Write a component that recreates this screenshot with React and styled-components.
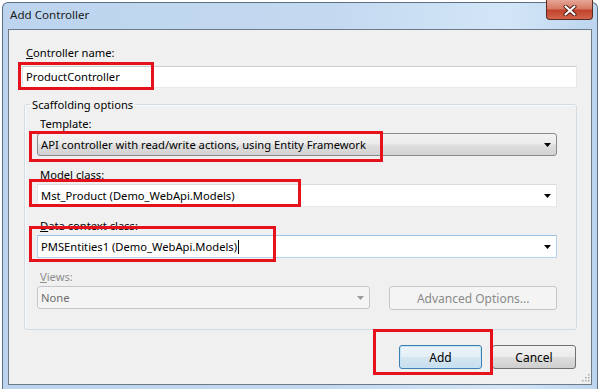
import React from "react";
import styled, { createGlobalStyle, css } from "styled-components";

const GlobalStyle = createGlobalStyle`
  html, body {
    margin: 0;
    padding: 0;
    background: #ffffff;
  }
  body {
    font-family: "Segoe UI", "Noto Sans", sans-serif;
    font-size: 11.2px;
    color: #000;
  }
  * {
    box-sizing: border-box;
  }
`;

const Window = styled.div`
  margin: 2px 0 0 2px;
  width: 596px;
  height: 387px;
  display: flex;
  flex-direction: column;
  border: 1px solid #5d6f84;
  border-bottom: none;
  border-radius: 6px 6px 0 0;
  background: linear-gradient(90deg, #bcd4ee 0%, #c3d9f0 55%, #d3e6f7 85%, #bcd5ee 100%);
`;

const TitleBar = styled.div`
  height: 26px;
  display: flex;
  align-items: flex-start;
  justify-content: space-between;
  padding: 0 4px 0 7px;
`;

const Title = styled.div`
  line-height: 24px;
  font-size: 11.6px;
  color: #1b1b1b;
`;

const CloseButton = styled.div`
  margin-top: -3px;
  width: 47px;
  height: 20px;
  display: flex;
  align-items: center;
  justify-content: center;
  padding-top: 1px;
  border: 1px solid #5a2b22;
  border-top: none;
  border-radius: 0 0 4px 4px;
  background: linear-gradient(180deg, #e6a797 0%, #d77a64 45%, #c3432c 55%, #d0654a 100%);
`;

const Client = styled.div`
  position: relative;
  margin: 0 5px;
  height: 356px;
  display: flex;
  flex-direction: column;
  padding: 15px 14px 0 13px;
  border: 1px solid #6b7989;
  background: #f0f0f0;
`;

const Label = styled.div`
  line-height: 15px;
  padding-left: ${(p) => (p.$indent ? p.$indent : 3)}px;
  margin-bottom: ${(p) => (p.$gap ? p.$gap : 2)}px;
  color: ${(p) => (p.$disabled ? "#8f8f8f" : "#000")};
`;

const Key = styled.span`
  text-decoration: underline;
`;

const Field = styled.div`
  position: relative;
  display: ${(p) => (p.$inline ? "inline-flex" : "flex")};
  flex-direction: column;
`;

const Mark = styled.div`
  position: absolute;
  z-index: 2;
  pointer-events: none;
  border: 3px solid #e5121c;
`;

const TextBox = styled.div`
  height: 22px;
  line-height: 20px;
  padding-left: 3px;
  background: #fff;
  border: 1px solid;
  border-color: #c9cdd2 #e2e6ea #e6eaee #e2e6ea;
`;

const Group = styled.fieldset`
  margin: 9px 0 0 2px;
  padding: 4px 19px 19px 12px;
  min-width: 0;
  border: 1px solid #d3dce2;
  border-radius: 3px;
  box-shadow: inset 1px 1px 0 #fbfbfb;
`;

const Legend = styled.legend`
  margin-left: -7px;
  padding: 0 2px;
  line-height: 15px;
`;

const Block = styled.div`
  margin-bottom: ${(p) => (p.$last ? 0 : 11)}px;
`;

const comboLooks = {
  button: css`
    border-color: #8a8a8a;
    border-radius: 3px;
    background: linear-gradient(180deg, #f3f3f3 0%, #ebebeb 48%, #dedede 52%, #d2d2d2 100%);
  `,
  edit: css`
    border-color: #d8dce0 #e3e6e9 #e6e9ec #e3e6e9;
    background: #fff;
  `,
  focus: css`
    border-color: #9bc1e6 #b3d0ec #b8d3ee #b3d0ec;
    background: #fff;
  `,
  disabled: css`
    border-color: #c4c7c9;
    border-radius: 3px;
    background: #f4f4f4;
    color: #6d6d6d;
  `,
};

const Combo = styled.div`
  width: ${(p) => (p.$width ? `${p.$width}px` : "auto")};
  height: 23px;
  display: flex;
  align-items: center;
  justify-content: space-between;
  padding: 0 5px 0 3px;
  border: 1px solid;
  ${(p) => comboLooks[p.$look || "edit"]}
`;

const ComboText = styled.span`
  line-height: 21px;
  white-space: nowrap;
`;

const Caret = styled.span`
  display: inline-block;
  width: 1px;
  height: 14px;
  margin-left: 1px;
  vertical-align: -3px;
  background: #000;
`;

const Arrow = ({ color = "#000" }) => (
  <svg width="7" height="4" viewBox="0 0 7 4">
    <polygon points="0,0 7,0 3.5,4" fill={color} />
  </svg>
);

const ViewsRow = styled.div`
  display: flex;
  gap: 19px;
`;

const buttonLooks = {
  normal: css`
    border-color: #707070;
    background: linear-gradient(180deg, #f2f2f2 0%, #ebebeb 48%, #dddddd 52%, #cfcfcf 100%);
    color: #000;
  `,
  focus: css`
    border-color: #3c7fb1;
    box-shadow: inset 0 0 0 1px #c4e5f6;
    background: linear-gradient(180deg, #eef5fa 0%, #e3eef6 48%, #d4e6f2 52%, #c8deee 100%);
    color: #000;
  `,
  disabled: css`
    border-color: #c4c7c9;
    background: #f4f4f4;
    color: #8a8a8a;
  `,
};

const Button = styled.div`
  width: ${(p) => p.$width}px;
  height: 24px;
  display: flex;
  align-items: center;
  justify-content: center;
  font-size: 12px;
  border: 1px solid;
  border-radius: 3px;
  ${(p) => buttonLooks[p.$look || "normal"]}
`;

const ButtonRow = styled.div`
  margin-top: 15px;
  padding-right: 1px;
  display: flex;
  justify-content: flex-end;
  gap: 10px;
`;

const Grip = styled.svg`
  position: absolute;
  right: 1px;
  bottom: 2px;
`;

const App = () => {
  return (
    <>
      <GlobalStyle />
      <Window>
        <TitleBar>
          <Title>Add Controller</Title>
          <CloseButton>
            <svg width="14" height="11" viewBox="0 0 14 11">
              <path d="M2.5 1.5 L11.5 9.5 M11.5 1.5 L2.5 9.5" stroke="#4b1a12" strokeWidth="4" strokeLinecap="round" />
              <path d="M2.5 1.5 L11.5 9.5 M11.5 1.5 L2.5 9.5" stroke="#ffffff" strokeWidth="2.2" strokeLinecap="round" />
            </svg>
          </CloseButton>
        </TitleBar>

        <Client>
          <Label $indent={4} $gap={6}>
            <Key>C</Key>ontroller name:
          </Label>
          <Field>
            <TextBox>ProductController</TextBox>
            <Mark style={{ left: -4, top: -4, width: 136, height: 28 }} />
          </Field>

          <Group>
            <Legend>Scaffolding options</Legend>

            <Block>
              <Label>Template:</Label>
              <Field>
                <Combo $look="button">
                  <ComboText>API controller with read/write actions, using Entity Framework</ComboText>
                  <Arrow />
                </Combo>
                <Mark style={{ left: -8, top: -2, width: 354, height: 31 }} />
              </Field>
            </Block>

            <Block>
              <Label>Model class:</Label>
              <Field>
                <Combo $look="edit">
                  <ComboText>Mst_Product (Demo_WebApi.Models)</ComboText>
                  <Arrow />
                </Combo>
                <Mark style={{ left: -8, top: -5, width: 272, height: 28 }} />
              </Field>
            </Block>

            <Block>
              <Label>
                <Key>D</Key>ata context class:
              </Label>
              <Field>
                <Combo $look="focus">
                  <ComboText>
                    PMSEntities1 (Demo_WebApi.Models)
                    <Caret />
                  </ComboText>
                  <Arrow />
                </Combo>
                <Mark style={{ left: -8, top: -9, width: 247, height: 36 }} />
              </Field>
            </Block>

            <Block $last>
              <Label $disabled>
                <Key>V</Key>iews:
              </Label>
              <ViewsRow>
                <Combo $look="disabled" $width={334}>
                  <ComboText>None</ComboText>
                  <Arrow color="#9a9a9a" />
                </Combo>
                <Button $look="disabled" $width={168}>
                  Advanced Options...
                </Button>
              </ViewsRow>
            </Block>
          </Group>

          <ButtonRow>
            <Field $inline>
              <Button $look="focus" $width={83}>
                Add
              </Button>
              <Mark style={{ left: -26, top: -16, width: 120, height: 46 }} />
            </Field>
            <Button $width={84}>Cancel</Button>
          </ButtonRow>

          <Grip width="9" height="9" viewBox="0 0 9 9">
            <g fill="#a8a8a8">
              <rect x="7" y="1" width="1.5" height="1.5" />
              <rect x="4" y="4" width="1.5" height="1.5" />
              <rect x="7" y="4" width="1.5" height="1.5" />
              <rect x="1" y="7" width="1.5" height="1.5" />
              <rect x="4" y="7" width="1.5" height="1.5" />
              <rect x="7" y="7" width="1.5" height="1.5" />
            </g>
          </Grip>
        </Client>
      </Window>
    </>
  );
};

export default App;
